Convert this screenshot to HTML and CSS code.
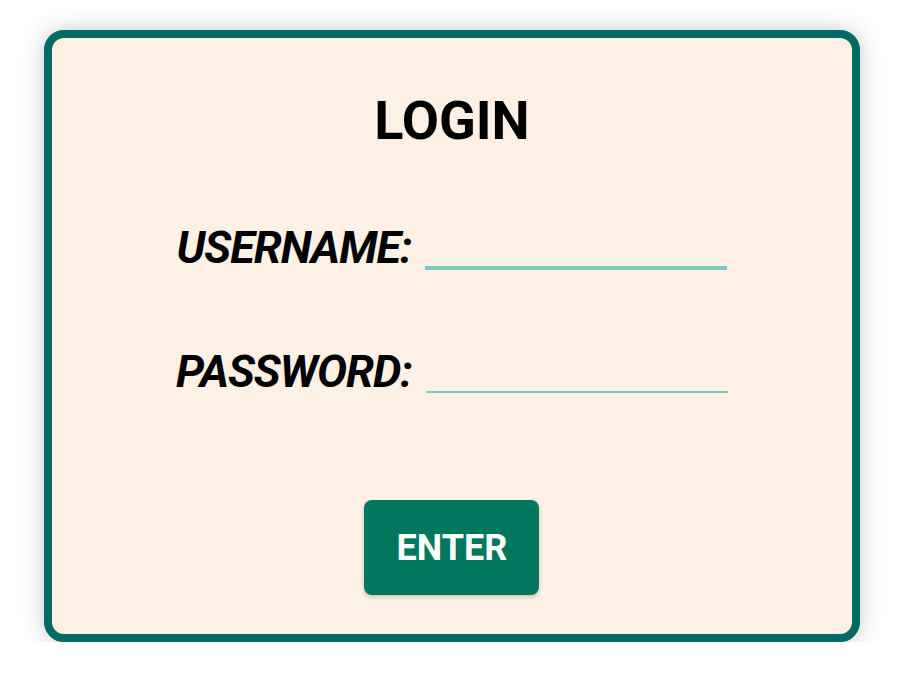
FILE: index.html
```html
<!DOCTYPE html>
<html lang="en">
<head>
    <meta charset="UTF-8">
    <meta name="viewport" content="width=device-width, initial-scale=1.0">
    <title>Login</title>
    <link rel="stylesheet" href="styles.css">
</head>
<body>
    <div class="page">
        <div class="login-card">
            <h1>LOGIN</h1>
            <form class="login-form">
                <div class="field">
                    <label for="username">USERNAME:</label>
                    <input type="text" id="username" class="input focused">
                </div>
                <div class="field">
                    <label for="password">PASSWORD:</label>
                    <input type="password" id="password" class="input">
                </div>
                <button type="button" class="enter-btn">ENTER</button>
            </form>
        </div>
    </div>
</body>
</html>
```

FILE: styles.css
```css
body {
    margin: 0;
    font-family: 'Roboto', 'Liberation Sans', sans-serif;
    background-color: #ffffff;
}
.page {
    height: 642px;
    overflow: hidden;
    padding-top: 30px;
    box-sizing: border-box;
}
.login-card {
    box-sizing: border-box;
    width: 816px;
    height: 612px;
    margin: 0 0 0 44px;
    background-color: #fdf1e6;
    border: 8px solid #036b65;
    border-radius: 20px;
    box-shadow: 0 0 22px rgba(0, 0, 0, 0.22);
    display: flex;
    flex-direction: column;
    align-items: center;
}
h1 {
    font-size: 54px;
    font-weight: 700;
    color: #000000;
    margin: 51px 0 0 0;
    line-height: 64px;
}
.login-form {
    display: flex;
    flex-direction: column;
    align-items: center;
}
.field {
    display: flex;
    align-items: flex-end;
    gap: 14px;
    margin-top: 73px;
}
.field + .field {
    margin-top: 80px;
}
.field label {
    font-size: 45px;
    font-weight: 700;
    font-style: italic;
    letter-spacing: -1px;
    color: #000000;
    line-height: 44px;
}
.input {
    width: 302px;
    height: 30px;
    border: none;
    border-bottom: 2px solid #80cbc0;
    background: transparent;
    outline: none;
    padding: 0;
    margin-bottom: 1px;
}
.input.focused {
    border-bottom: 4px solid #7ccbbe;
    margin-bottom: 0;
}
.enter-btn {
    margin-top: 106px;
    width: 175px;
    height: 95px;
    background-color: #01785d;
    color: #ffffff;
    border: none;
    border-radius: 8px;
    font-family: 'Roboto', 'Liberation Sans', sans-serif;
    font-size: 36px;
    font-weight: 700;
    box-shadow: 0 2px 4px rgba(0, 0, 0, 0.2);
    cursor: pointer;
}
```
